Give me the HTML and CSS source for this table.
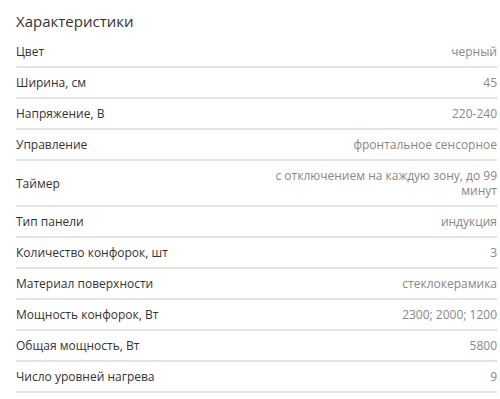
FILE: index.html
```html
<!DOCTYPE html>
<html lang="ru">
<head>
<meta charset="utf-8">
<link rel="stylesheet" href="styles.css">
</head>
<body>
<section class="specs">
  <h2 class="specs-title">Характеристики</h2>
  <div class="row"><span class="label">Цвет</span><span class="value">черный</span></div>
  <div class="row"><span class="label">Ширина, см</span><span class="value">45</span></div>
  <div class="row"><span class="label">Напряжение, В</span><span class="value">220-240</span></div>
  <div class="row"><span class="label">Управление</span><span class="value">фронтальное сенсорное</span></div>
  <div class="row"><span class="label">Таймер</span><span class="value">с отключением на каждую зону, до 99 минут</span></div>
  <div class="row"><span class="label">Тип панели</span><span class="value">индукция</span></div>
  <div class="row"><span class="label">Количество конфорок, шт</span><span class="value">3</span></div>
  <div class="row"><span class="label">Материал поверхности</span><span class="value">стеклокерамика</span></div>
  <div class="row"><span class="label">Мощность конфорок, Вт</span><span class="value">2300; 2000; 1200</span></div>
  <div class="row"><span class="label">Общая мощность, Вт</span><span class="value">5800</span></div>
  <div class="row"><span class="label">Число уровней нагрева</span><span class="value">9</span></div>
</section>
</body>
</html>
```
FILE: styles.css
```css
html, body {
  margin: 0;
  padding: 0;
  background: #fff;
}
body {
  font-family: "Open Sans", "Liberation Sans", sans-serif;
  color: #333;
}
.specs {
  padding: 0 3px 0 16px;
}
.specs-title {
  margin: 0;
  padding: 10px 0 5px;
  font-size: 15px;
  line-height: 22px;
  font-weight: 400;
  color: #333;
}
.row {
  display: flex;
  justify-content: space-between;
  align-items: center;
  gap: 20px;
  padding: 7px 0;
  border-bottom: 2px solid #e3e3e3;
  font-size: 12px;
  line-height: 15px;
}
.label {
  color: #333;
}
.value {
  color: #888;
  text-align: right;
  max-width: 224px;
}
```
